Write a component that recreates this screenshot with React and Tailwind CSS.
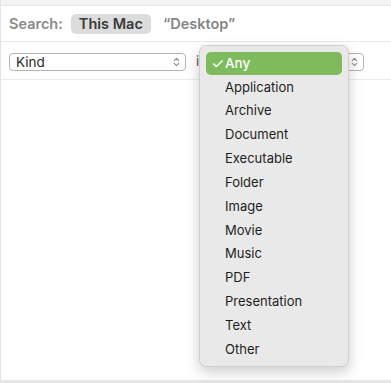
import React from "react";

const items = ["Application","Archive","Document","Executable","Folder","Image","Movie","Music","PDF","Presentation","Text","Other"];

function Chevrons({ className }) {
  return (
    <svg width="7" height="10" viewBox="0 0 7 10" className={className} fill="none" stroke="#8a8a8a" strokeWidth="1.1" strokeLinecap="round" strokeLinejoin="round">
      <path d="M1.2 3.6 L3.5 1.3 L5.8 3.6" />
      <path d="M1.2 6.4 L3.5 8.7 L5.8 6.4" />
    </svg>
  );
}

export default function App() {
  return (
    <div className="relative w-[391px] h-[383px] bg-white overflow-hidden border-l border-[#e4e4e4] text-[13px]" style={{ fontFamily: "Inter, 'Liberation Sans', sans-serif" }}>
      <div className="h-[6px] bg-[#f4f4f4] border-b border-[#e6e6e6]" />
      <div className="h-[36px] flex items-center pl-[8px] border-b border-[#ebebeb] text-[14.5px] font-semibold">
        <span className="text-[#8a8a8a]">Search:</span>
        <span className="ml-[8px] h-[20px] px-[8px] flex items-center rounded-[5px] bg-[#dcdcdc] text-[#3a3a3a]">This Mac</span>
        <span className="ml-[12px] text-[#858585]">“Desktop”</span>
      </div>
      <div className="h-[38px] flex items-center pt-[3px] border-b border-[#ebebeb]">
        <div className="ml-[8px] w-[177px] h-[18px] rounded-[4px] border border-[#b3b3b3] bg-white flex items-center justify-between pl-[6px] pr-[5px] text-[#2a2a2a] text-[13.5px]">
          <span>Kind</span>
          <Chevrons />
        </div>
        <span className="ml-[10px] text-[#555]">is</span>
        <div className="ml-auto mr-[27px] w-[20px] h-[18px] rounded-[4px] border border-[#b3b3b3] bg-white flex items-center justify-center">
          <Chevrons />
        </div>
      </div>
      <div className="absolute left-0 right-0 top-[380px] h-[3px] bg-[#e6e6e6]" />

      <div className="absolute left-[198px] top-[45px] w-[150px] h-[322px] rounded-[7px] border border-[#cfcfcf] bg-[#e9e9e9] pt-[6px] px-[6px] shadow-[0_5px_14px_rgba(0,0,0,0.2)]">
        <div className="h-[23px] rounded-[5px] bg-[#7dbb5c] flex items-center pl-[5px] text-white font-medium text-[13.5px]">
          <span className="w-[14px] text-[15px] font-normal leading-none">✓</span>
          <span>Any</span>
        </div>
        {items.map((t) => (
          <div key={t} className="h-[23.83px] pt-[1px] flex items-center pl-[19px] text-[#1e1e1e]">
            {t}
          </div>
        ))}
      </div>
    </div>
  );
}
